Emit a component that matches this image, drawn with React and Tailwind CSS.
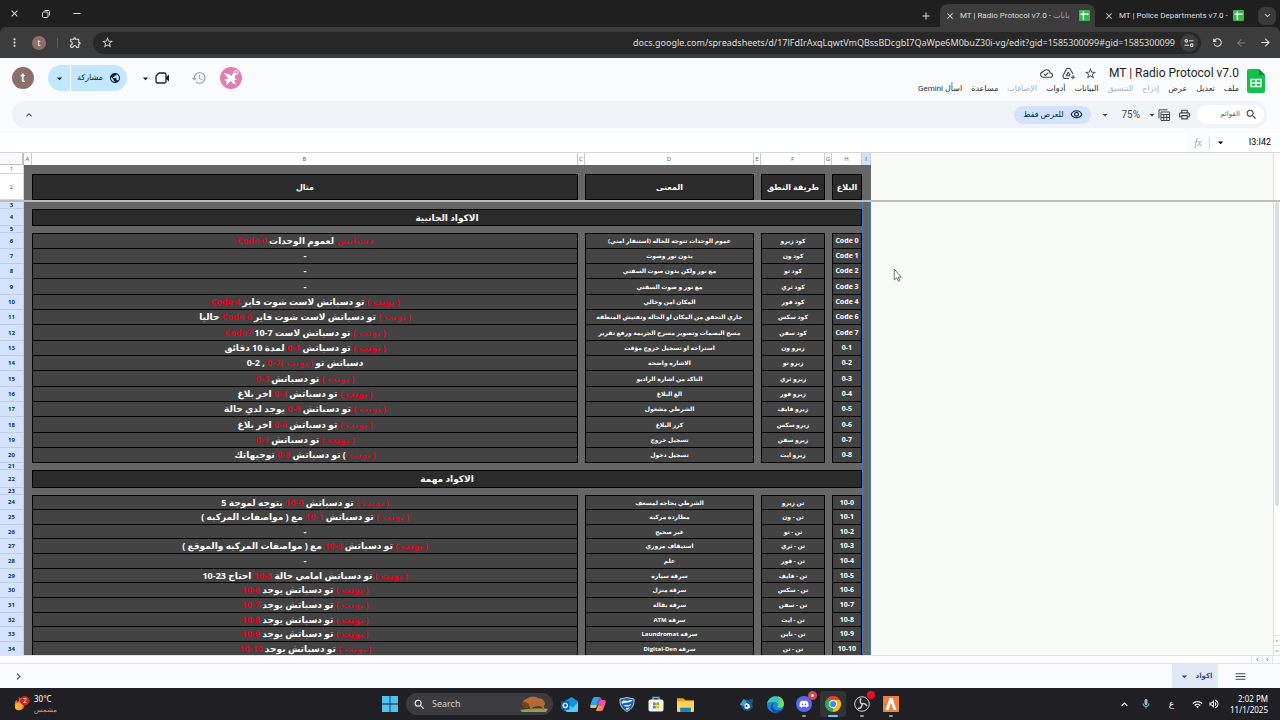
import {
  MdAdd, MdArrowBack, MdArrowDropDown, MdArrowForward, MdClose, MdHistory, MdKeyboardArrowDown,
  MdKeyboardArrowRight, MdKeyboardArrowUp, MdMenu, MdMoreVert, MdOutlineCloudDone,
  MdOutlineExtension, MdOutlinePrint, MdOutlineVisibility, MdPublic, MdRefresh, MdSearch,
  MdStarBorder, MdOutlineMic, MdWifi, MdOutlineVolumeUp,
} from 'react-icons/md'
import { FaDiscord } from 'react-icons/fa'

const unit = { red: '( يونت )' }

const sideCodes = [
  { code: 'Code 0', say: 'كود زيرو', mean: 'عموم الوحدات تتوجه للحاله (استنفار امني)', ex: [{ red: 'دسباتش' }, ' لعموم الوحدات ', { red: 'Code 0' }] },
  { code: 'Code 1', say: 'كود ون', mean: 'بدون نور وصوت', ex: ['-'] },
  { code: 'Code 2', say: 'كود تو', mean: 'مع نور ولكن بدون صوت السفتي', ex: ['-'] },
  { code: 'Code 3', say: 'كود ثري', mean: 'مع نور و صوت السفتي', ex: ['-'] },
  { code: 'Code 4', say: 'كود فور', mean: 'المكان امن وخالي', ex: [unit, ' تو دسباتش لاست شوت فاير ', { red: 'Code 4' }] },
  { code: 'Code 6', say: 'كود سكس', mean: 'جاري التحقق من المكان او الحاله وتفتيش المنطقه', ex: [unit, ' تو دسباتش لاست شوت فاير ', { red: 'Code 6' }, ' حاليا'] },
  { code: 'Code 7', say: 'كود سفن', mean: 'مسح البصمات وتصوير مسرح الجريمة ورفع تقرير', ex: [unit, ' تو دسباتش لاست ', { num: '10-7' }, ' ', { red: 'Code7' }] },
  { code: '0-1', say: 'زيرو ون', mean: 'استراحه او تسجيل خروج مؤقت', ex: [unit, ' تو دسباتش ', { red: '0-1' }, ' لمدة 10 دقائق'] },
  { code: '0-2', say: 'زيرو تو', mean: 'الاشاره واضحه', ex: ['دسباتش تو ', unit, { red: '0-2' }, ' , ', { num: '0-2' }] },
  { code: '0-3', say: 'زيرو ثري', mean: 'التاكد من اشارة الراديو', ex: [unit, ' تو دسباتش ', { red: '0-3' }] },
  { code: '0-4', say: 'زيرو فور', mean: 'الغ البلاغ', ex: [unit, ' تو دسباتش ', { red: '0-4' }, ' اخر بلاغ'] },
  { code: '0-5', say: 'زيرو فايف', mean: 'الشرطي مشغول', ex: [unit, ' تو دسباتش ', { red: '0-5' }, ' يوجد لدي حالة'] },
  { code: '0-6', say: 'زيرو سكس', mean: 'كرر البلاغ', ex: [unit, ' تو دسباتش ', { red: '0-6' }, ' اخر بلاغ'] },
  { code: '0-7', say: 'زيرو سفن', mean: 'تسجيل خروج', ex: [unit, ' تو دسباتش ', { red: '0-7' }] },
  { code: '0-8', say: 'زيرو ايت', mean: 'تسجيل دخول', ex: [{ red: '( يونت' }, ' ) تو دسباتش ', { red: '0-8' }, ' توجيهاتك'] },
]

const mainCodes = [
  { code: '10-0', say: 'تن زيرو', mean: 'الشرطي بحاجه لمسعف', ex: [unit, ' تو دسباتش ', { red: '10-0' }, ' يتوجه لموجة 5'] },
  { code: '10-1', say: 'تن - ون', mean: 'مطاردة مركبة', ex: [unit, ' تو دسباتش ', { red: '10-1' }, ' مع ( مواصفات المركبه )'] },
  { code: '10-2', say: 'تن - تو', mean: 'غير صحيح', ex: ['-'] },
  { code: '10-3', say: 'تن - ثري', mean: 'استيقاف مروري', ex: [unit, ' تو دسباتش ', { red: '10-3' }, ' مع ( مواصفات المركبه والموقع )'] },
  { code: '10-4', say: 'تن - فور', mean: 'علم', ex: ['-'] },
  { code: '10-5', say: 'تن - فايف', mean: 'سرقة سياره', ex: [unit, ' تو دسباتش امامي حالة ', { red: '10-5' }, ' احتاج ', { num: '10-23' }] },
  { code: '10-6', say: 'تن - سكس', mean: 'سرقة منزل', ex: [unit, ' تو دسباتش يوجد ', { red: '10-6' }] },
  { code: '10-7', say: 'تن - سفن', mean: 'سرقة بقاله', ex: [unit, ' تو دسباتش يوجد ', { red: '10-7' }] },
  { code: '10-8', say: 'تن - ايت', mean: 'سرقة ATM', ex: [unit, ' تو دسباتش يوجد ', { red: '10-8' }] },
  { code: '10-9', say: 'تن - ناين', mean: 'سرقة Laundromat', ex: [unit, ' تو دسباتش يوجد ', { red: '10-9' }] },
  { code: '10-10', say: 'تن - تن', mean: 'سرقة Digital-Den', ex: [unit, ' تو دسباتش يوجد ', { red: '10-10' }] },
]

const menus = [
  { label: 'اسأل Gemini' },
  { label: 'مساعدة' },
  { label: 'الإضافات', off: true },
  { label: 'أدوات' },
  { label: 'البيانات' },
  { label: 'التنسيق', off: true },
  { label: 'إدراج', off: true },
  { label: 'عرض' },
  { label: 'تعديل' },
  { label: 'ملف' },
]

function SheetsMark({ className }) {
  return (
    <svg viewBox="0 0 12 12" className={className}>
      <rect width="12" height="12" rx="1" fill="#34b84f" />
      <path d="M1.500 4.500h9M4.800 1.500v9" stroke="#fff" strokeWidth="1.600" />
    </svg>
  )
}

function Tab({ title, active }) {
  return (
    <div className={`flex items-center gap-[5px] h-[23px] px-[5px] rounded-t-lg ${active ? 'bg-[#3c3c3c] w-[155px]' : 'w-[154px] pl-[9px]'}`}>
      <button aria-label="Close tab" className="text-[#dedede]"><MdClose size={10} /></button>
      <span className="flex-1 min-w-0 whitespace-nowrap text-[8px] leading-[14px] text-[#dedede] font-['Roboto','DejaVu_Sans',sans-serif]">{title}</span>
      <SheetsMark className="w-[11px] h-[11px] shrink-0" />
    </div>
  )
}

function BrowserBar() {
  return (
    <header className="shrink-0 bg-[#1f1f1f] text-[#dedede] font-['Noto_Sans','DejaVu_Sans',sans-serif]">
      <div className="flex items-end justify-between h-[27px] pr-[4px]">
        <div className="flex items-center gap-[21px] h-full pl-[9px]">
          <button aria-label="Close"><MdClose size={11} /></button>
          <button aria-label="Restore">
            <svg viewBox="0 0 10 10" className="w-[10px] h-[10px]" fill="none" stroke="currentColor">
              <rect x="1.5" y="3" width="5.5" height="5.5" rx="1" />
              <path d="M3.5 1.5h4a1 1 0 0 1 1 1v4" />
            </svg>
          </button>
          <button aria-label="Minimize"><svg viewBox="0 0 10 10" className="w-[10px] h-[10px]" stroke="currentColor"><path d="M1.5 4.500h7" /></svg></button>
        </div>
        <div className="flex items-end">
          <button aria-label="New tab" className="self-center mr-2"><MdAdd size={12} /></button>
          <Tab active title={<>MT | Radio Protocol v7.0 - <span className="text-[#9a9a9a]">يانات</span></>} />
          <Tab title="MT | Police Departments v7.0 -" />
          <button aria-label="Search tabs" className="flex items-center justify-center self-center ml-[9px] w-[18px] h-[18px] rounded-md bg-[#3a3a3a]"><MdKeyboardArrowDown size={11} /></button>
        </div>
      </div>
      <div className="flex items-center h-[31px] bg-[#3c3c3c] rounded-t-md">
        <button aria-label="Menu" className="ml-2"><MdMoreVert size={13} /></button>
        <button aria-label="Profile" className="ml-[11px] w-[14px] h-[14px] rounded-full bg-[#8d6e68] text-[8px] leading-[13px] text-white">t</button>
        <span className="ml-[11px] w-px h-[10px] bg-[#5e5e5e]" />
        <button aria-label="Extensions" className="ml-[11px] mr-[11px]"><MdOutlineExtension size={13} /></button>
        <div className="flex flex-1 items-center h-[22px] px-2 rounded-full bg-[#282828]">
          <button aria-label="Bookmark"><MdStarBorder size={13} /></button>
          <input
            aria-label="Address"
            readOnly
            className="flex-1 min-w-0 bg-transparent text-right text-[9px] leading-[14px] mr-[5px] outline-none"
            value="docs.google.com/spreadsheets/d/17lFdIrAxqLqwtVmQBssBDcgbI7QaWpe6M0buZ30i-vg/edit?gid=1585300099#gid=1585300099"
          />
          <button aria-label="Site information" className="flex items-center justify-center -mr-[5px] w-[18px] h-[18px] rounded-full bg-[#3c3c3c]">
            <svg viewBox="0 0 10 10" className="w-[10px] h-[10px]" fill="none" stroke="currentColor" strokeWidth="1.100">
              <circle cx="2.300" cy="2.800" r="1.300" />
              <path d="M5 2.800h4.500M.5 7.200H5" />
              <circle cx="7.700" cy="7.200" r="1.300" />
            </svg>
          </button>
        </div>
        <button aria-label="Reload" className="ml-[10px] -scale-x-100"><MdRefresh size={13} /></button>
        <button aria-label="Forward" className="ml-[11px] text-[#7c7c7c]"><MdArrowBack size={12} /></button>
        <button aria-label="Back" className="ml-3 mr-2"><MdArrowForward size={13} /></button>
      </div>
    </header>
  )
}

function DocHeader() {
  return (
    <div className="flex shrink-0 items-start justify-between h-[43px] px-3 text-[#1f1f1f]">
      <div className="flex items-center h-[40px]">
        <button aria-label="Account" className="w-[22px] h-[22px] rounded-full bg-[#8d6e68] text-white text-[13px] leading-[20px] font-medium">t</button>
        <div className="flex items-center ml-[14px] h-[26px] rounded-full bg-[#c2e7ff] text-[#001d35]">
          <button aria-label="Share options" className="flex justify-center w-[22px]"><MdArrowDropDown size={13} /></button>
          <span className="w-px h-full bg-[#f9fbfd]" />
          <button className="flex items-center justify-center gap-[6px] w-[56px] text-[8px]">مشاركة<MdPublic size={12} /></button>
        </div>
        <button aria-label="Meet" className="flex items-center ml-3 gap-[3px]">
          <MdArrowDropDown size={13} />
          <svg viewBox="0 0 15 12" className="w-[15px] h-[12px]" fill="none" stroke="currentColor" strokeWidth="1.300">
            <path d="M4 1h5.500a1.500 1.500 0 0 1 1.500 1.500v7A1.500 1.500 0 0 1 9.500 11h-7A1.500 1.500 0 0 1 1 9.500V4z" />
            <path d="M11 5l3-2.500v7L11 7z" fill="currentColor" stroke="none" />
          </svg>
        </button>
        <button aria-label="History" className="ml-[21px] text-[#a5a8ab]"><MdHistory size={16} /></button>
        <button aria-label="Viewer" className="flex items-center justify-center ml-[13px] w-[22px] h-[22px] rounded-full bg-[#e07fb2]">
          <svg viewBox="0 0 22 22" className="w-[20px] h-[20px]" fill="#fff">
            <path d="M3 5.500l6 1.500 2.500 2 2-3.500 2.500-.5 1.500 1.500-1.500 1-1 3.500 2.500 2-3 .5 2 5-4-2-1.500-2.500-1.500 1.500-3.500 3.500.2-4.500L3.500 13l4.500-1.500z" />
            <circle cx="16.500" cy="5" r="2.200" fill="none" stroke="#fff" />
          </svg>
        </button>
      </div>
      <div className="flex items-center gap-2 pt-2 pr-[3px]">
        <div>
          <div className="flex items-center justify-end gap-[9px] h-[15px] text-[#444746]">
            <MdOutlineCloudDone size={13} />
            <svg viewBox="0 0 13 13" className="w-[13px] h-[13px]" fill="none" stroke="currentColor" strokeWidth="1.100">
              <path d="M7 11.500H2.200L.8 9 4.800 1.500h3L11 7M6.300 5L4.300 8.700H8M6.300 5l1.700 3M9 10.300h4M11 8.300v4" />
            </svg>
            <button aria-label="Star" className="mr-[3px]"><MdStarBorder size={13} /></button>
            <h1 className="text-[12px] leading-[15px] text-[#1f1f1f]">MT | Radio Protocol v7.0</h1>
          </div>
          <nav className="flex justify-end gap-[9px] h-[15px] text-[8px] leading-[16px]">
            {menus.map(m => (
              <button key={m.label} dir="rtl" disabled={m.off} className={m.off ? 'text-[#b1b4b7]' : 'text-[#303335]'}>{m.label}</button>
            ))}
          </nav>
        </div>
        <svg viewBox="0 0 18 24" className="w-[18px] h-[24px]">
          <path d="M2 0h10l6 6v16a2 2 0 0 1-2 2H2a2 2 0 0 1-2-2V2a2 2 0 0 1 2-2z" fill="#12c14a" />
          <path d="M12 0l6 6h-6z" fill="#0b8a35" />
          <path d="M4 10.500h10v7H4zM4 14h10M9 10.500v7" fill="none" stroke="#fff" strokeWidth="1.300" />
        </svg>
      </div>
    </div>
  )
}

function Toolbar() {
  return (
    <div className="flex shrink-0 items-center justify-between h-[27px] ml-3 mr-[13px] mb-[5px] pl-[11px] pr-[3px] rounded-full bg-[#f0f4f9] text-[#444746]">
      <button aria-label="Hide menus"><MdKeyboardArrowUp size={12} /></button>
      <div className="flex items-center">
        <button className="flex items-center justify-center gap-[6px] w-[77px] h-[18px] rounded-full bg-[#d3e3fd] text-[#041e49] text-[8px]">للعرض فقط<MdOutlineVisibility size={13} /></button>
        <button className="flex items-center gap-[10px] ml-[8px] text-[10px]"><MdArrowDropDown size={12} />75%</button>
        <button aria-label="Filter views" className="flex items-center ml-[6px]">
          <MdArrowDropDown size={12} />
          <svg viewBox="0 0 12 12" className="w-[12px] h-[12px]" fill="none" stroke="currentColor">
            <path d="M3 11.500h8.500V3H3zM3 5.500h8.500M3 8.500h8.500M5.800 5.500v6M8.700 5.500v6M1 9.500V.8h8.500" />
          </svg>
        </button>
        <button aria-label="Print" className="ml-[8px]"><MdOutlinePrint size={13} /></button>
        <label className="flex items-center ml-[6px] h-[19px] w-[67px] pr-[6px] rounded-full bg-white">
          <input dir="rtl" aria-label="Menus" placeholder="القوائم" className="flex-1 min-w-0 bg-transparent text-[7px] placeholder:text-[#5f6368] outline-none pr-[5px]" />
          <MdSearch size={13} />
        </label>
      </div>
    </div>
  )
}

function FormulaBar() {
  return (
    <div className="flex shrink-0 items-center h-[20px] bg-white border-b border-[#d5d7d9]">
      <input aria-label="Formula" className="flex-1 min-w-0 outline-none" />
      <span className="flex items-center justify-center w-[22px] h-full bg-[#f9fbfd] text-[10px] italic text-[#9aa0a6] font-['Liberation_Serif',serif]">fx</span>
      <span className="w-px h-3 bg-[#d5d7d9]" />
      <button aria-label="Named ranges" className="ml-[4px]"><MdArrowDropDown size={13} /></button>
      <input aria-label="Name box" defaultValue="I3:I42" className="w-[44px] text-right mr-[9px] text-[9px] outline-none" />
    </div>
  )
}

function Rich({ parts }) {
  return parts.map((p, i) => {
    if (typeof p === 'string') return <span key={i}>{p}</span>
    if (p.num) return <bdi key={i} dir="ltr">{p.num}</bdi>
    return <bdi key={i} className="text-[#df0420]">{p.red}</bdi>
  })
}

function RowHead({ n, selected, className }) {
  return (
    <th scope="row" className={`${className} p-0 border-b border-r text-[6px] leading-[6px] ${selected ? 'bg-[#d3e3fd] border-[#c0cfe8] text-[#12305f] font-bold' : 'bg-white border-[#d5d7d9] text-[#575b5f] font-normal'}`}>{n}</th>
  )
}

const edge = 'p-0 border-l border-r border-[#3f7bc8]'
const box = 'p-0 border-b border-l border-r border-black bg-[#434343] whitespace-nowrap overflow-hidden'
const heading = 'p-0 border border-black bg-[#2b2b2b] font-bold leading-[12px] whitespace-nowrap'

function GapRow({ n, className }) {
  return (
    <tr>
      <RowHead n={n} selected className={className} />
      <td colSpan={8} className="p-0" />
      <td className={edge} />
    </tr>
  )
}

function SectionRow({ n, title, className }) {
  return (
    <tr>
      <RowHead n={n} selected className={className} />
      <td className="p-0" />
      <td colSpan={7} dir="rtl" className={`${heading} text-[9px]`}>{title}</td>
      <td className={edge} />
    </tr>
  )
}

function CodeRow({ n, row, first, className }) {
  const cell = `${box} ${first ? 'border-t' : ''}`
  return (
    <tr>
      <RowHead n={n} selected className={className} />
      <td />
      <td dir="rtl" className={`${cell} text-[9px] leading-[12px]`}><Rich parts={row.ex} /></td>
      <td />
      <td dir="rtl" className={`${cell} text-[6px] leading-[12px]`}>{row.mean}</td>
      <td />
      <td dir="rtl" className={`${cell} text-[6px] leading-[12px]`}>{row.say}</td>
      <td />
      <td className={`${cell} text-[7px] leading-[12px]`}>{row.code}</td>
      <td className={edge} />
    </tr>
  )
}

function Sheet() {
  return (
    <div className="relative flex flex-1 min-h-0 overflow-hidden bg-[#f8faf8]">
      <div className="flex-1 min-w-0 overflow-hidden">
        <table className="table-fixed w-[871px] border-separate border-spacing-0 bg-[#666666] text-white text-center font-bold font-['Open_Sans','DejaVu_Sans',sans-serif]">
          <colgroup>
            <col className="w-[24px]" />
            <col className="w-[8px]" />
            <col className="w-[546px]" />
            <col className="w-[7px]" />
            <col className="w-[169px]" />
            <col className="w-[7px]" />
            <col className="w-[64px]" />
            <col className="w-[7px]" />
            <col className="w-[30px]" />
            <col className="w-[9px]" />
          </colgroup>
          <thead>
            <tr className="bg-white text-[#575b5f] text-[6px] leading-[8px]">
              <td className="h-[12px] p-0 bg-[#f8f9fa] border-r-2 border-b border-[#c0c0c0]" />
              {['A', 'B', 'C', 'D', 'E', 'F', 'G', 'H', 'I'].map(c => (
                <th key={c} scope="col" className={`p-0 border-r border-[#c8cacc] font-normal ${c === 'I' ? 'bg-[#d3e3fd] text-[#12305f]' : ''}`}>{c}</th>
              ))}
            </tr>
          </thead>
          <tbody>
            <tr>
              <RowHead n={1} className="h-[9px]" />
              <td colSpan={9} className="p-0" />
            </tr>
            <tr className="text-[8px]">
              <RowHead n={2} className="h-[26px]" />
              <td />
              <th scope="col" className={heading}>مثال</th>
              <td />
              <th scope="col" className={heading}>المعنى</th>
              <td />
              <th scope="col" className={heading}>طريقة النطق</th>
              <td />
              <th scope="col" className={heading}>البلاغ</th>
              <td />
            </tr>
            <tr><td colSpan={10} className="h-[2px] p-0 bg-[#bdbdbd]" /></tr>
            <GapRow n={3} className="h-[7px]" />
            <SectionRow n={4} title="الاكواد الجانبية" className="h-[17px]" />
            <GapRow n={5} className="h-[7px]" />
            {sideCodes.map((row, i) => (
              <CodeRow key={row.code} n={i + 6} row={row} first={i === 0} className={i % 3 === 0 ? 'h-[16px]' : 'h-[15px]'} />
            ))}
            <GapRow n={21} className="h-[7px]" />
            <SectionRow n={22} title="الاكواد مهمة" className="h-[18px]" />
            <GapRow n={23} className="h-[6px]" />
            {mainCodes.map((row, i) => (
              <CodeRow key={row.code} n={i + 24} row={row} first={i === 0} className={i % 3 === 2 ? 'h-[14px]' : 'h-[15px]'} />
            ))}
          </tbody>
        </table>
      </div>
      <div className="flex flex-col w-[7px] shrink-0 bg-white border-l border-[#dcdee0]">
        <span className="h-[49px] border-b-2 border-[#bdbdbd]" />
        <span className="h-[304px] mx-px rounded-full bg-[#dadce0]" />
        <span className="flex-1" />
        <button aria-label="Scroll up" className="h-[10px] border-t border-[#dcdee0] text-[#5f6368]"><MdKeyboardArrowUp size={6} /></button>
        <button aria-label="Scroll down" className="h-[10px] border-t border-[#dcdee0] text-[#5f6368]"><MdKeyboardArrowDown size={6} /></button>
      </div>
      <span className="absolute left-[871px] right-0 top-[47px] h-[2px] bg-[#bdbdbd]" />
      <svg viewBox="0 0 8 13" className="absolute left-[893px] top-[115px] w-[9px] h-[14px]">
        <path d="M1 1v10l2.300-2 1.500 3.300 1.400-.6-1.500-3.200h2.800z" fill="#fff" stroke="#444" strokeWidth=".7" />
      </svg>
    </div>
  )
}

function SheetTabs() {
  return (
    <div className="shrink-0 bg-[#f9fbfd]">
      <div className="flex justify-end items-center h-[9px] pr-[7px] bg-white border-y border-[#e1e3e5] text-[#5f6368]">
        <button aria-label="Scroll left" className="flex justify-center w-[11px] border-l border-[#e1e3e5]"><MdKeyboardArrowRight size={7} className="-scale-x-100" /></button>
        <button aria-label="Scroll right" className="flex justify-center w-[11px] border-x border-[#e1e3e5]"><MdKeyboardArrowRight size={7} /></button>
      </div>
      <div className="flex items-center justify-between h-[24px] text-[#444746]">
        <button aria-label="Next sheets" className="ml-3"><MdKeyboardArrowRight size={13} /></button>
        <div className="flex items-center h-full">
          <button className="flex items-center justify-center gap-[5px] w-[46px] h-full bg-[#e1e9f7] text-[#174ea6] text-[7px] font-bold"><MdArrowDropDown size={13} />اكواد</button>
          <button aria-label="All sheets" className="ml-4 mr-[33px]"><MdMenu size={13} /></button>
        </div>
      </div>
    </div>
  )
}

function Slot({ children, label, dot, active }) {
  return (
    <button aria-label={label} className={`relative flex items-center justify-center w-[26px] h-[26px] rounded ${active ? 'bg-[#333337]' : ''}`}>
      {children}
      {dot && <span className={`absolute bottom-0 h-[2px] rounded-full ${active ? 'w-[10px] bg-[#60cdff]' : 'w-[4px] bg-[#9a9a9a]'}`} />}
    </button>
  )
}

function Taskbar() {
  return (
    <footer className="grid grid-cols-[1fr_auto_1fr] shrink-0 items-center h-[32px] bg-[#202024] text-white font-['Noto_Sans','DejaVu_Sans',sans-serif]">
      <div className="flex items-center gap-[4px] pl-[13px]">
        <svg viewBox="0 0 18 20" className="w-[17px] h-[19px]">
          <path d="M2 11a6 6 0 0 1 2-6c0 2 1 2.500 2 1 1-2 0-3-.5-4 4 1 7 5 6.500 9a5 5 0 0 1-10 0z" fill="#f0582c" />
          <circle cx="6" cy="12" r="4" fill="#fbb034" />
          <circle cx="12.500" cy="6" r="5" fill="#c42b1c" />
          <text x="12.500" y="8.500" fontSize="7" fill="#fff" textAnchor="middle">2</text>
        </svg>
        <div className="text-[8px] leading-[11px]">
          <div>30°C</div>
          <div className="text-[#a8a8a8] text-[7px]">مشمس</div>
        </div>
      </div>
      <div className="flex items-center gap-[3px] pl-[6px]">
        <button aria-label="Start" className="mr-[5px]">
          <svg viewBox="0 0 16 16" className="w-[16px] h-[16px]" fill="#4cc2f5">
            <path d="M0 0h7.600v7.600H0zM8.400 0H16v7.600H8.400zM0 8.400h7.600V16H0zM8.400 8.400H16V16H8.400z" />
          </svg>
        </button>
        <label className="flex items-center w-[147px] h-[22px] pl-[7px] pr-1 gap-[6px] rounded-full bg-[#3c3c40]">
          <MdSearch size={13} />
          <input aria-label="Search" placeholder="Search" className="flex-1 min-w-0 bg-transparent text-[9px] placeholder:text-[#cfcfcf] outline-none" />
          <svg viewBox="0 0 30 18" className="w-[30px] h-[18px]">
            <path d="M1 15c4-1 24-2 28-1l-2 3H3z" fill="#8fa348" />
            <path d="M4 7c1-3 4-3 5-4 4-2 8-1 10 0 4 0 7 3 7 6l-1 2v4h-2v-3l-3-1-6 1-1 3h-2v-3l-2-1-1 2-3-1c-2-1-2-3-1-5z" fill="#b56a34" />
            <path d="M4 7c2 0 5 0 6 3l-2 3-3-1c-2-1-2-3-1-5z" fill="#7c3f1b" />
          </svg>
        </label>
        <Slot label="Outlook">
          <svg viewBox="0 0 16 16" className="w-[17px] h-[17px]">
            <path d="M3 5l7-4 6 4v9H3z" fill="#1490df" />
            <path d="M6 7l5 4 5-5v8a1 1 0 0 1-1 1H5z" fill="#50d0f5" />
            <rect y="5" width="8" height="8" rx="1" fill="#0f5fb8" />
            <circle cx="4" cy="9" r="2" fill="none" stroke="#fff" strokeWidth="1.200" />
          </svg>
        </Slot>
        <Slot label="Copilot">
          <svg viewBox="0 0 16 16" className="w-[16px] h-[16px]">
            <path d="M5 1h5l-3 9c-.5 2-1 2-3 2H2c-2 0-2-2-1.500-3.500L2.500 3C3 2 3.500 1 5 1z" fill="#26a8e8" />
            <path d="M2.500 9h4l-1 3H2c-2 0-2-2-1-3z" fill="#f3c33c" />
            <path d="M11 15H6l3-9c.5-2 1-2 3-2h2c2 0 2 2 1.500 3.500L13.500 13c-.5 1-1 2-2.500 2z" fill="#e9568f" />
            <path d="M9 1c2 0 2 1 3 3-2 0-2.500 0-3 2L8 9 6 8z" fill="#7a5be0" />
            <path d="M6 15l2-5h5l-1 4c-2 1.500-4 1-6 1z" fill="#f58a4b" />
          </svg>
        </Slot>
        <Slot label="Security">
          <svg viewBox="0 0 16 16" className="w-[16px] h-[16px]">
            <path d="M1 3l7-1.500L15 3c.5 6-2 10-7 12.500C3 13 .5 9 1 3z" fill="#1d5fb5" stroke="#d8e8f8" strokeWidth=".8" />
            <path d="M2.500 6c3-3 5 0 7-1.500 1.500-1 3-.5 4-.5-1 2-3 2-5 2.500-2 .5-4 0-5.500 1.500zM4.500 10c2-2 4 0 8-2-1 2-3 2.500-5 2.500M6.500 12.500c1-1 3 0 4.500-1.500-1 2-2 2.500-3 3z" fill="#e6f2fc" />
          </svg>
        </Slot>
        <Slot label="Store">
          <svg viewBox="0 0 16 16" className="w-[16px] h-[16px]">
            <path d="M5 4V1.500h6V4" fill="none" stroke="#5bb8f0" strokeWidth="1.400" />
            <rect x=".5" y="3.500" width="15" height="12" rx="2" fill="#f4f6f8" />
            <path d="M5 6.500h2.700v2.700H5z" fill="#f25022" />
            <path d="M8.300 6.500H11v2.700H8.300z" fill="#7fba00" />
            <path d="M5 9.800h2.700v2.700H5z" fill="#00a4ef" />
            <path d="M8.300 9.800H11v2.700H8.300z" fill="#ffb900" />
          </svg>
        </Slot>
        <Slot label="Explorer">
          <svg viewBox="0 0 16 16" className="w-[17px] h-[17px]">
            <path d="M0 2h6l2 2h8v10H0z" fill="#e8a317" />
            <path d="M0 5h16v9a1 1 0 0 1-1 1H1a1 1 0 0 1-1-1z" fill="#fcd45a" />
            <path d="M3 11h10v4H3z" fill="#1b7fc2" />
          </svg>
        </Slot>
        <span className="w-[29px]" />
        <Slot label="Game">
          <svg viewBox="0 0 16 16" className="w-[15px] h-[15px]">
            <path d="M1 8l4-6 4 1 6-1-1 6 1 3-5 4-5-1z" fill="#155a86" />
            <path d="M1 8l4-6 3 3-2 5z" fill="#35a7d4" />
            <path d="M6 8l2-2 3 2 1 3-3 2-3-1z" fill="#e8f4fa" />
            <circle cx="8" cy="9.500" r="1" fill="#123" />
          </svg>
        </Slot>
        <Slot label="Edge">
          <svg viewBox="0 0 16 16" className="w-[17px] h-[17px]">
            <circle cx="8" cy="8" r="8" fill="#1a86d8" />
            <path d="M.2 7A8 8 0 0 1 16 7.500c0 2.500-2 3.500-4 3.500-1.500 0-2.500-.5-2-1.500 1-2-.5-4-3-4-3 0-5.500 1-6.800 1.500z" fill="#3fc9a8" />
            <path d="M10 .3A8 8 0 0 1 16 7.500c0 2.500-2 3.500-4 3.500-1.500 0-2.500-.5-2-1.500 3-2 3-6 0-9.200z" fill="#6fdc6a" />
            <path d="M7 6c-3 2-2 7.500 4 7.500 1.500 0 2.500-.3 3.500-.8C12 16.500 6 17 4 13c-1.500-3 0-6 3-7z" fill="#0d4f9c" />
          </svg>
        </Slot>
        <Slot label="Discord" dot>
          <span className="flex items-center justify-center w-[16px] h-[16px] rounded-full bg-[#5865f2]"><FaDiscord size={10} /></span>
          <span className="absolute right-0 top-0 w-[9px] h-[9px] rounded-full bg-white border-[3px] border-[#d9414f]" />
        </Slot>
        <Slot label="Chrome" dot active>
          <svg viewBox="0 0 16 16" className="w-[16px] h-[16px]">
            <path d="M8 8L1.070 4A8 8 0 0 1 14.930 4z" fill="#ea4335" />
            <path d="M8 8L14.930 4A8 8 0 0 1 8 16z" fill="#fbbc04" />
            <path d="M8 8V16A8 8 0 0 1 1.070 4z" fill="#34a853" />
            <path d="M8 4h6.930L11.500 10z" fill="#fbbc04" />
            <path d="M1.070 4L4.500 10 8 4z" fill="#34a853" />
            <circle cx="8" cy="8" r="4" fill="#fff" />
            <circle cx="8" cy="8" r="3.100" fill="#4285f4" />
          </svg>
        </Slot>
        <Slot label="OBS" dot>
          <svg viewBox="0 0 16 16" className="w-[16px] h-[16px]" fill="none" stroke="#d5d5d5">
            <circle cx="8" cy="8" r="7.300" fill="#222" />
            <path d="M7 2.500c-2 3 0 5 1 5.500M13 10c-2-3-4-2.500-5-2M4 12.500c3.500 0 4-3 4-4.500" strokeWidth="1.500" />
          </svg>
          <span className="absolute right-0 top-0 w-[8px] h-[8px] rounded-full bg-[#e81123]" />
        </Slot>
        <Slot label="Launcher" dot>
          <svg viewBox="0 0 16 16" className="w-[16px] h-[16px]">
            <rect width="16" height="16" fill="#f08040" />
            <path d="M6.500 2h3L13.500 14h-3L8 6.500 5.500 14h-3z" fill="#fff" />
          </svg>
        </Slot>
      </div>
      <div className="flex items-center justify-end pr-3">
        <button aria-label="Show hidden icons"><MdKeyboardArrowUp size={13} /></button>
        <MdOutlineMic size={12} className="ml-[9px] text-[#7cc4dc]" />
        <span className="ml-[17px] text-[9px]">ع</span>
        <MdWifi size={11} className="ml-[18px]" />
        <MdOutlineVolumeUp size={12} className="ml-[5px]" />
        <div className="ml-[10px] text-right text-[8px] leading-[11px]">
          <div>2:02 PM</div>
          <div>11/1/2025</div>
        </div>
      </div>
    </footer>
  )
}

export default function App() {
  return (
    <div className="flex flex-col h-screen overflow-hidden bg-[#f9fbfd] font-['Roboto','DejaVu_Sans',sans-serif]">
      <BrowserBar />
      <DocHeader />
      <Toolbar />
      <FormulaBar />
      <Sheet />
      <SheetTabs />
      <Taskbar />
    </div>
  )
}
